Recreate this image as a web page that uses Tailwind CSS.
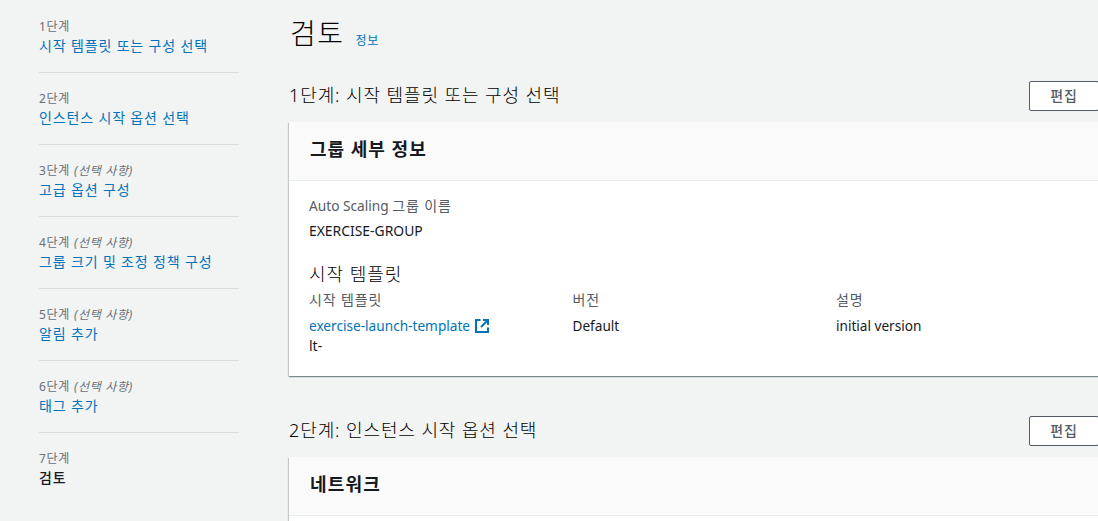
<!DOCTYPE html>
<html lang="ko">
<head>
<meta charset="utf-8">
<script src="https://cdn.jsdelivr.net/npm/@tailwindcss/browser@4"></script>
</head>
<body class="m-0 h-[521px] w-[1098px] overflow-hidden bg-[#f2f3f3] font-['Noto_Sans','Noto_Sans_CJK_KR',sans-serif] text-[14px] leading-[20px] text-[#16191f]">
<div class="flex h-[521px] w-[1098px] overflow-hidden">
  <nav class="ml-[39px] w-[200px] shrink-0">
    <ol>
      <li class="h-[73px] border-b border-[#d5dbdb] pt-[18px]">
        <div class="text-[12px] leading-[18px] tracking-[0.7px] text-[#687078]">1단계</div>
        <a class="block leading-[20px] tracking-[0.85px] text-[#0073bb]">시작 템플릿 또는 구성 선택</a>
      </li>
      <li class="h-[72px] border-b border-[#d5dbdb] pt-[17px]">
        <div class="text-[12px] leading-[18px] tracking-[0.7px] text-[#687078]">2단계</div>
        <a class="block leading-[20px] tracking-[0.85px] text-[#0073bb]">인스턴스 시작 옵션 선택</a>
      </li>
      <li class="h-[72px] border-b border-[#d5dbdb] pt-[17px]">
        <div class="text-[12px] leading-[18px] tracking-[0.7px] text-[#687078]">3단계 <i>(선택 사항)</i></div>
        <a class="block leading-[20px] tracking-[0.85px] text-[#0073bb]">고급 옵션 구성</a>
      </li>
      <li class="h-[72px] border-b border-[#d5dbdb] pt-[17px]">
        <div class="text-[12px] leading-[18px] tracking-[0.7px] text-[#687078]">4단계 <i>(선택 사항)</i></div>
        <a class="block leading-[20px] tracking-[0.85px] text-[#0073bb]">그룹 크기 및 조정 정책 구성</a>
      </li>
      <li class="h-[72px] border-b border-[#d5dbdb] pt-[17px]">
        <div class="text-[12px] leading-[18px] tracking-[0.7px] text-[#687078]">5단계 <i>(선택 사항)</i></div>
        <a class="block leading-[20px] tracking-[0.85px] text-[#0073bb]">알림 추가</a>
      </li>
      <li class="h-[72px] border-b border-[#d5dbdb] pt-[17px]">
        <div class="text-[12px] leading-[18px] tracking-[0.7px] text-[#687078]">6단계 <i>(선택 사항)</i></div>
        <a class="block leading-[20px] tracking-[0.85px] text-[#0073bb]">태그 추가</a>
      </li>
      <li class="h-[72px] pt-[17px]">
        <div class="text-[12px] leading-[18px] tracking-[0.7px] text-[#687078]">7단계</div>
        <a class="block font-medium leading-[20px] tracking-[0.85px] text-[#16191f]">검토</a>
      </li>
    </ol>
  </nav>
  <main class="ml-[50px] w-[830px] shrink-0">
    <div class="flex h-[66px] items-start pl-px pt-[13px]">
      <h1 class="text-[28px] font-light leading-[40px] tracking-[1.5px] text-black">검토</h1>
      <a class="ml-[11px] mt-[19px] text-[12px] leading-[18px] tracking-[0.7px] text-[#0073bb]">정보</a>
    </div>
    <section>
      <div class="flex h-[56px] w-[810px] items-start justify-between">
        <h2 class="mt-[17px] text-[18px] font-light leading-[24px] tracking-[0.9px] text-black">1단계: 시작 템플릿 또는 구성 선택</h2>
        <button class="mt-[15px] h-[30px] w-[70px] shrink-0 rounded-[2px] border border-[#545b64] bg-white text-center text-[14px] font-medium tracking-[0.85px] text-[#545b64]">편집</button>
      </div>
      <div class="h-[254px] bg-white shadow-[0_1px_1px_0_rgba(0,28,36,0.3),1px_1px_1px_0_rgba(0,28,36,0.15),-1px_1px_1px_0_rgba(0,28,36,0.15)]">
        <div class="flex h-[59px] items-center border-b border-[#eaeded] bg-[#fafafa] px-[21px] pb-[4px]">
          <h3 class="text-[18px] font-bold leading-[24px] tracking-[1px]">그룹 세부 정보</h3>
        </div>
        <div class="px-[20px] pt-[15px]">
          <div class="leading-[20px] text-[#545b64]"><span class="text-[13.7px]">Auto Scaling</span> <span class="tracking-[0.85px]">그룹 이름</span></div>
          <div class="mt-[5px] text-[13.9px] leading-[20px]">EXERCISE-GROUP</div>
          <h4 class="mt-[21px] text-[18px] font-light leading-[24px] tracking-[0.95px] text-black">시작 템플릿</h4>
          <div class="mt-[4px] grid grid-cols-[263.5px_263.5px_1fr]">
            <div>
              <div class="leading-[20px] tracking-[0.85px] text-[#545b64]">시작 템플릿</div>
              <div class="mt-[6px] flex items-center text-[13.65px] leading-[20px] text-[#0073bb]">exercise-launch-template
                <svg class="ml-[4px]" width="16" height="16" viewBox="0 0 16 16" fill="none" stroke="#0073bb" stroke-width="2"><path d="M6.5 2H2v12h12V9.5"/><path d="M9 2h5v5"/><path d="M14 2 7 9"/></svg>
              </div>
              <div class="leading-[20px]">lt-</div>
            </div>
            <div>
              <div class="leading-[20px] tracking-[0.85px] text-[#545b64]">버전</div>
              <div class="mt-[6px] text-[13.6px] leading-[20px]">Default</div>
            </div>
            <div>
              <div class="leading-[20px] tracking-[0.85px] text-[#545b64]">설명</div>
              <div class="mt-[6px] text-[13.6px] leading-[20px]">initial version</div>
            </div>
          </div>
        </div>
      </div>
    </section>
    <section class="mt-[25px]">
      <div class="flex h-[56px] w-[810px] items-start justify-between">
        <h2 class="mt-[17px] text-[18px] font-light leading-[24px] tracking-[0.9px] text-black">2단계: 인스턴스 시작 옵션 선택</h2>
        <button class="mt-[15px] h-[30px] w-[70px] shrink-0 rounded-[2px] border border-[#545b64] bg-white text-center text-[14px] font-medium tracking-[0.85px] text-[#545b64]">편집</button>
      </div>
      <div class="h-[200px] bg-white shadow-[0_1px_1px_0_rgba(0,28,36,0.3),1px_1px_1px_0_rgba(0,28,36,0.15),-1px_1px_1px_0_rgba(0,28,36,0.15)]">
        <div class="flex h-[59px] items-center border-b border-[#eaeded] bg-[#fafafa] px-[21px] pb-[4px]">
          <h3 class="text-[18px] font-bold leading-[24px] tracking-[1.2px]">네트워크</h3>
        </div>
      </div>
    </section>
  </main>
</div>
</body>
</html>
